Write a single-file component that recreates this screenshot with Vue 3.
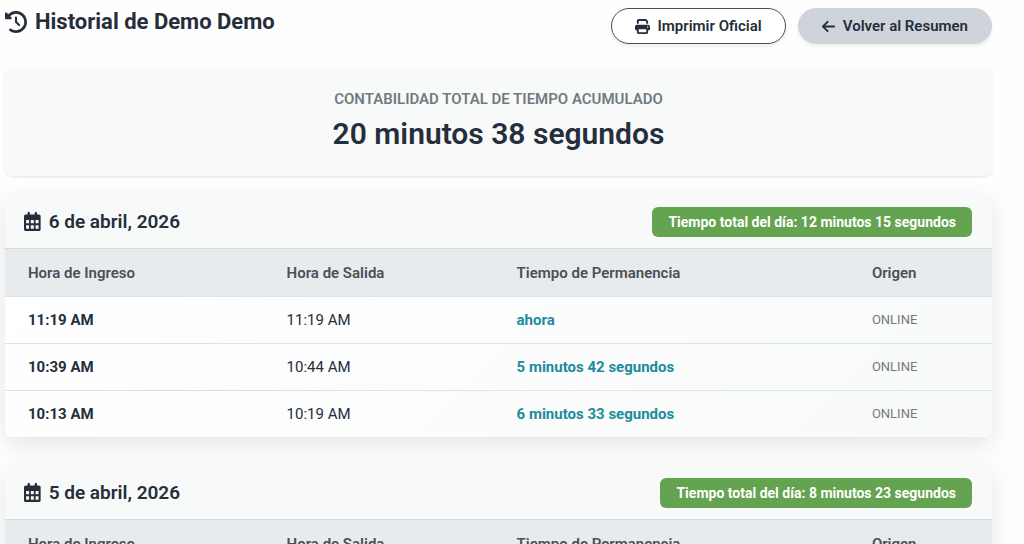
<script setup>
const columns = ['Hora de Ingreso', 'Hora de Salida', 'Tiempo de Permanencia', 'Origen']

const days = [
  {
    date: '6 de abril, 2026',
    total: '12 minutos 15 segundos',
    visits: [
      { start: '11:19 AM', end: '11:19 AM', stay: 'ahora', origin: 'ONLINE' },
      { start: '10:39 AM', end: '10:44 AM', stay: '5 minutos 42 segundos', origin: 'ONLINE' },
      { start: '10:13 AM', end: '10:19 AM', stay: '6 minutos 33 segundos', origin: 'ONLINE' },
    ],
  },
  {
    date: '5 de abril, 2026',
    total: '8 minutos 23 segundos',
    visits: [],
  },
]
</script>

<template>
  <main class="page">
    <header class="top">
      <h1 class="title">
        <svg class="title-icon" viewBox="0 0 512 512" aria-hidden="true">
          <path d="M75 75L41 41C25.9 25.9 0 36.6 0 57.9V168c0 13.3 10.7 24 24 24H134.1c21.4 0 32.1-25.9 17-41l-30.8-30.8C155 85.5 203 64 256 64c106 0 192 86 192 192s-86 192-192 192c-40.8 0-78.6-12.7-109.7-34.4c-14.5-10.1-34.4-6.6-44.6 7.9s-6.6 34.4 7.9 44.6C151.2 495 201.7 512 256 512c141.4 0 256-114.6 256-256S397.4 0 256 0C185.3 0 121.3 28.7 75 75zm181 53c-13.3 0-24 10.7-24 24V256c0 6.4 2.5 12.5 7 17l72 72c9.4 9.4 24.6 9.4 33.9 0s9.4-24.6 0-33.9l-65-65V152c0-13.3-10.7-24-24-24z" />
        </svg>
        Historial de Demo Demo
      </h1>
      <div class="actions">
        <button type="button" class="btn btn-outline">
          <svg class="btn-icon" viewBox="0 0 512 512" aria-hidden="true">
            <path d="M128 0C92.7 0 64 28.7 64 64v96h64V64H354.7L384 93.3V160h64V93.3c0-17-6.7-33.3-18.7-45.3L400 18.7C388 6.7 371.7 0 354.7 0H128zM384 352v32 64H128V384 368 352H384zm64 32h32c17.7 0 32-14.3 32-32V256c0-35.3-28.7-64-64-64H64c-35.3 0-64 28.7-64 64v96c0 17.7 14.3 32 32 32H64v64c0 35.3 28.7 64 64 64H384c35.3 0 64-28.7 64-64V384zM432 248a24 24 0 1 1 0 48 24 24 0 1 1 0-48z" />
          </svg>
          Imprimir Oficial
        </button>
        <a href="#" class="btn btn-soft">
          <svg class="btn-icon" viewBox="0 0 448 512" aria-hidden="true">
            <path d="M9.4 233.4c-12.5 12.5-12.5 32.8 0 45.3l160 160c12.5 12.5 32.8 12.5 45.3 0s12.5-32.8 0-45.3L109.2 288 416 288c17.7 0 32-14.3 32-32s-14.3-32-32-32l-306.7 0L214.6 118.6c12.5-12.5 12.5-32.8 0-45.3s-32.8-12.5-45.3 0l-160 160z" />
          </svg>
          Volver al Resumen
        </a>
      </div>
    </header>

    <section class="summary">
      <h2 class="summary-label">CONTABILIDAD TOTAL DE TIEMPO ACUMULADO</h2>
      <p class="summary-value">20 minutos 38 segundos</p>
    </section>

    <section v-for="day in days" :key="day.date" class="card">
      <div class="card-head">
        <h2 class="card-title">
          <svg class="card-icon" viewBox="0 0 448 512" aria-hidden="true">
            <path fill-rule="evenodd" d="M128 0c17.700 0 32 14.300 32 32V64H288V32c0-17.700 14.300-32 32-32s32 14.300 32 32V64h48c26.500 0 48 21.500 48 48V464c0 26.500-21.500 48-48 48H48c-26.500 0-48-21.500-48-48V112C0 85.500 21.500 64 48 64H96V32c0-17.700 14.300-32 32-32zM56 216V304H136V216zM184 216V304H264V216zM312 216V304H392V216zM56 360V448H136V360zM184 360V448H264V360zM312 360V448H392V360z" />
          </svg>
          {{ day.date }}
        </h2>
        <span class="badge">Tiempo total del día: {{ day.total }}</span>
      </div>
      <table class="visits">
        <thead>
          <tr>
            <th v-for="column in columns" :key="column" scope="col">{{ column }}</th>
          </tr>
        </thead>
        <tbody>
          <tr v-for="visit in day.visits" :key="visit.start">
            <td class="start">{{ visit.start }}</td>
            <td>{{ visit.end }}</td>
            <td class="stay">{{ visit.stay }}</td>
            <td class="origin">{{ visit.origin }}</td>
          </tr>
        </tbody>
      </table>
    </section>
  </main>
</template>

<style>
body {
  background: #fefefe;
}
html {
  overflow: hidden;
}
</style>

<style scoped>
.page {
  padding: 8px 32px 0 5px;
  font-family: Roboto, "Liberation Sans", sans-serif;
  font-size: 16px;
  color: #252e3a;
}
.top {
  display: flex;
  justify-content: space-between;
  align-items: flex-start;
  margin-bottom: 24px;
}
.title {
  display: flex;
  align-items: center;
  gap: 8px;
  margin: 0;
  font-size: 22px;
  line-height: 28px;
  font-weight: 700;
}
.title-icon {
  width: 22px;
  height: 22px;
  fill: currentColor;
}
.actions {
  display: flex;
  gap: 12px;
}
.btn {
  display: flex;
  align-items: center;
  gap: 8px;
  box-sizing: border-box;
  height: 36px;
  padding: 0 23px;
  border: 1px solid transparent;
  border-radius: 18px;
  font: 600 15px/20px Roboto, "Liberation Sans", sans-serif;
  color: #252e3a;
  text-decoration: none;
  box-shadow: 0 2px 4px rgba(0, 0, 0, 0.08);
}
.btn-outline {
  background: #fff;
  border-color: #454e5a;
}
.btn-soft {
  background: #ced4da;
  border-color: #ced4da;
}
.btn-icon {
  height: 15px;
  fill: currentColor;
}
.summary {
  padding: 22px 24px 24px;
  border-radius: 8px;
  background: #f8faf9;
  text-align: center;
  box-shadow: 0 1px 3px rgba(0, 0, 0, 0.1);
}
.summary-label {
  margin: 0 0 8px;
  font-size: 15px;
  line-height: 18px;
  font-weight: 600;
  color: #727a81;
}
.summary-value {
  margin: 0;
  font-size: 30px;
  line-height: 36px;
  font-weight: 600;
}
.card {
  margin: 19px 0 29px;
  border-radius: 8px;
  overflow: hidden;
  background: linear-gradient(135deg, #fff, #f8faf9);
  box-shadow: 0 8px 24px rgba(0, 0, 0, 0.1);
}
.card + .card {
  margin-top: 0;
}
.card-head {
  display: flex;
  justify-content: space-between;
  align-items: center;
  height: 53px;
  padding: 0 20px 0 19px;
  background: #f8faf9;
  border-bottom: 1px solid #d5dade;
}
.card-title {
  display: flex;
  align-items: center;
  gap: 8px;
  margin: 0;
  font-size: 19px;
  line-height: 24px;
  font-weight: 600;
}
.card-icon {
  height: 19px;
  fill: currentColor;
}
.badge {
  padding: 5px 16px;
  border-radius: 6px;
  background: #64a34f;
  color: #fff;
  font-size: 14px;
  line-height: 20px;
  font-weight: 700;
}
.visits {
  width: 100%;
  table-layout: fixed;
  border-collapse: collapse;
  font-size: 15px;
  line-height: 20px;
}
.visits th,
.visits td {
  box-sizing: border-box;
  padding: 13px 23px;
  text-align: left;
  border-bottom: 1px solid #dde2e4;
}
.visits th {
  padding-top: 14px;
  background: #e8ebee;
  color: #495057;
  font-weight: 600;
}
.visits th:nth-child(1) {
  width: 26.2%;
}
.visits th:nth-child(2) {
  width: 23.3%;
}
.visits th:nth-child(3) {
  width: 36%;
}
.visits th:nth-child(4) {
  width: 14.5%;
}
.visits tbody tr:last-child td {
  border-bottom: 0;
}
.visits .start {
  font-weight: 700;
}
.visits .stay {
  font-weight: 700;
  color: #208b9c;
}
.visits .origin {
  font-size: 13px;
  color: #727a81;
}
</style>
